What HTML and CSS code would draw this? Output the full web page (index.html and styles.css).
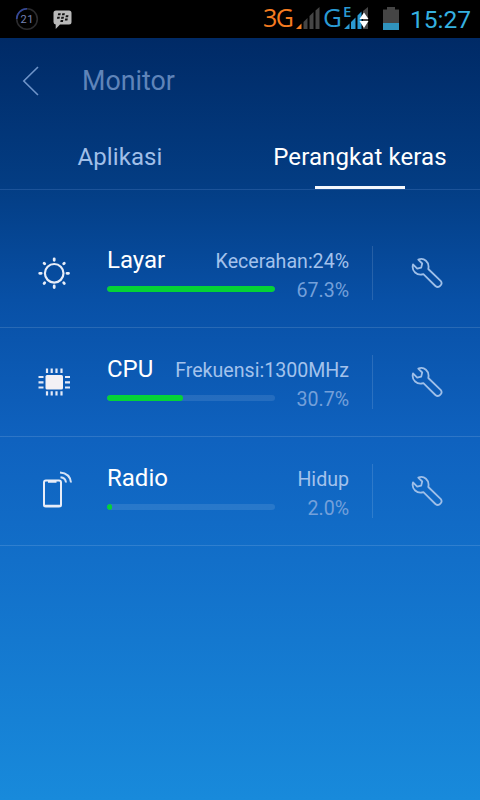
FILE: index.html
```html
<!DOCTYPE html>
<html lang="id">
<head>
    <meta charset="UTF-8">
    <meta name="viewport" content="width=device-width, initial-scale=1.0">
    <title>Monitor</title>
    <link rel="stylesheet" href="styles.css">
</head>
<body>
    <svg width="0" height="0" class="defs">
        <symbol id="wrench" viewBox="0 0 32 32">
            <path d="M7.3 2.6 C12.8 .4 18.8 4.6 17.3 12 L29.6 23.8 C32.4 27.2 28 31.8 24.4 29 L12.4 17.2 C6 19.2 .2 14 2 7.4 L6.2 11.6 L10.2 10.6 L11.2 6.5 Z"/>
        </symbol>
    </svg>

    <div class="status-bar">
        <svg class="usage" width="24" height="24" viewBox="0 0 24 24">
            <circle cx="12" cy="12" r="10.3" fill="none" stroke="#2b2b2e" stroke-width="1.6"/>
            <path d="M1.7 12 A10.3 10.3 0 0 1 12 1.7" fill="none" stroke="#34489a" stroke-width="1.6"/>
            <text x="12.3" y="16" text-anchor="middle">21</text>
        </svg>
        <svg class="bbm" width="20" height="20" viewBox="0 0 20 20">
            <path d="M3 .5 H16 Q18.5 .5 18.5 3 V12 Q18.5 14.5 16 14.5 H7 L2.7 19 V14.5 Q.5 14.3 .5 12 V3 Q.5 .5 3 .5 Z" fill="#b9b9b9"/>
            <path d="M5.2 3.3 h2.6 l-.4 2 h-2.6z M9.3 3.3 h2.6 l-.4 2 h-2.6z M4.3 6.7 h2.6 l-.4 2 h-2.6z M8.4 6.7 h2.6 l-.4 2 h-2.6z M12.9 5.2 h2.6 l-.4 2 h-2.6z M12.2 8.5 h2.6 l-.4 2 h-2.6z M7.7 10 h2.6 l-.4 2 h-2.6z" fill="#111"/>
        </svg>
        <span class="net net-3g">3G</span>
        <svg class="signal" width="24" height="23" viewBox="0 0 24 23">
            <path d="M0 22 L5.5 16.5 V22 Z" fill="#f57c20"/>
            <path d="M7.5 15 l4 -4 V22 h-4z M13.5 9 l4 -4 V22 h-4z M19.5 3.5 L23.5 0 V22 h-4z" fill="#454545"/>
        </svg>
        <span class="net net-g">G</span>
        <div class="edge">
            <svg class="signal" width="25" height="23" viewBox="0 0 25 23">
                <path d="M0 22 L5.5 16.5 V22 Z M7 15 l4.5 -4.5 V22 H7z M13.5 8.5 l4 -4 V22 h-4z" fill="#2a9ad3"/>
                <path d="M19 4 L24 0 V22 h-5z" fill="#454545"/>
                <path d="M15.5 12 L20 5.5 L24.5 12 Z M15.5 14 H24.5 L20 21 Z" fill="#fff"/>
            </svg>
            <span class="edge-label">E</span>
        </div>
        <svg class="battery" width="17" height="24" viewBox="0 0 17 24">
            <path d="M0 2.5 H4 V0 H12 V2.5 H16 V16 H0 Z" fill="#454545"/>
            <path d="M0 16 H16 V23 H0 Z" fill="#3093bd"/>
        </svg>
        <span class="clock">15:27</span>
    </div>

    <div class="header">
        <svg class="back" width="18" height="30" viewBox="0 0 18 30">
            <path d="M16 1 L1.8 15 L16 29"/>
        </svg>
        <h1>Monitor</h1>
    </div>

    <div class="tabs">
        <div class="tab"><span>Aplikasi</span></div>
        <div class="tab active"><span>Perangkat keras</span></div>
    </div>

    <div class="list">
        <div class="row">
            <svg class="icon" width="36" height="36" viewBox="0 0 36 36">
                <circle cx="18.2" cy="18.3" r="9.3" fill="none" stroke="#e8edf8" stroke-width="2.2"/>
                <path d="M18.2 3.8 V5.3 M18.2 31 V32.5 M3.7 18.3 H5.2 M31 18.3 H32.5 M8.1 8.2 L8.7 8.8 M27.7 27.8 L28.3 28.4 M8.1 28.4 L8.7 27.8 M27.7 8.8 L28.3 8.2" fill="none" stroke="#e8edf8" stroke-width="2.8" stroke-linecap="round"/>
            </svg>
            <div class="info">
                <div class="line"><span class="name">Layar</span><span class="detail">Kecerahan:24%</span></div>
                <div class="line usage-line">
                    <div class="bar"><div class="fill" style="width: 100%"></div></div>
                    <span class="percent">67.3%</span>
                </div>
            </div>
            <div class="tool"><svg width="32" height="32"><use href="#wrench"/></svg></div>
        </div>

        <div class="row">
            <svg class="icon" width="36" height="36" viewBox="0 0 36 36">
                <rect x="9.5" y="11" width="17.5" height="14.5" rx="1.5" fill="#f3f1f5"/>
                <path d="M11 4.5 V9 M15.7 4.5 V9 M20.5 4.5 V9 M25.5 4.5 V9 M11 27.3 V31.5 M15.7 27.3 V31.5 M20.5 27.3 V31.5 M25.5 27.3 V31.5 M2.5 13 H7.5 M2.5 18.3 H7.5 M2.5 23.5 H7.5 M29 13 H34 M29 18.3 H34 M29 23.5 H34" fill="none" stroke="#e3e9f7" stroke-width="2.2"/>
            </svg>
            <div class="info">
                <div class="line"><span class="name">CPU</span><span class="detail">Frekuensi:1300MHz</span></div>
                <div class="line usage-line">
                    <div class="bar"><div class="fill" style="width: 45.5%"></div></div>
                    <span class="percent">30.7%</span>
                </div>
            </div>
            <div class="tool"><svg width="32" height="32"><use href="#wrench"/></svg></div>
        </div>

        <div class="row">
            <svg class="icon" width="36" height="40" viewBox="0 0 36 40">
                <path d="M9.3 7.5 H23 Q25 7.5 25 9.5 V32 Q25 33.5 23 33.5 H9.8 Q8 33.5 8 32 V9.5 Q8 7.5 9.8 7.5 Z" fill="none" stroke="#e8edf8" stroke-width="2"/>
                <path d="M12 8.9 H20.5 M8.5 32.7 H24.5" stroke="#e8edf8" stroke-width="1.8"/>
                <path d="M24.5 4.3 Q29.5 4.8 30 9.5 M24 -.5 Q34 .3 35 9.5" fill="none" stroke="#d5e2f5" stroke-width="2"/>
            </svg>
            <div class="info">
                <div class="line"><span class="name">Radio</span><span class="detail">Hidup</span></div>
                <div class="line usage-line">
                    <div class="bar"><div class="fill" style="width: 2.7%"></div></div>
                    <span class="percent">2.0%</span>
                </div>
            </div>
            <div class="tool"><svg width="32" height="32"><use href="#wrench"/></svg></div>
        </div>
    </div>
</body>
</html>
```
FILE: styles.css
```css
* {
    box-sizing: border-box;
}

body {
    margin: 0;
    width: 480px;
    height: 800px;
    overflow: hidden;
    font-family: Roboto, sans-serif;
    color: #fff;
    background: linear-gradient(#002a66 38px, #033c82 180px, #0850a6 300px, #0f62bf 440px, #126fc9 560px, #188adb 800px);
}

.defs {
    display: block;
}

.status-bar {
    display: flex;
    align-items: flex-start;
    height: 38px;
    background: #000;
}

.usage {
    margin: 7px 0 0 15px;
}

.usage text {
    font-size: 11px;
    letter-spacing: 0.5px;
    fill: #7482b4;
}

.bbm {
    margin: 10px 0 0 14px;
}

.net {
    font-family: "Open Sans", sans-serif;
    font-size: 25px;
    letter-spacing: -1.5px;
    line-height: 35px;
}

.net-3g {
    width: 33px;
    margin-left: 190px;
    color: #f57c20;
}

.signal {
    display: block;
    margin-top: 7px;
}

.net-g {
    width: 21px;
    margin-left: 3px;
    font-size: 26px;
    color: #2a9ad3;
}

.edge {
    position: relative;
}

.edge-label {
    position: absolute;
    left: -1px;
    top: 3px;
    font-family: "Open Sans", sans-serif;
    font-size: 15px;
    font-weight: 600;
    line-height: 17px;
    color: #2a9ad3;
}

.battery {
    margin: 7px 0 0 14px;
}

.clock {
    margin-left: 10px;
    font-size: 24.5px;
    line-height: 40px;
    color: #35b1e0;
}

.header {
    display: flex;
    align-items: center;
    height: 86px;
    padding-left: 22px;
}

.back {
    margin-top: -1px;
}

.back path {
    fill: none;
    stroke: #6f94c9;
    stroke-width: 1.6;
}

h1 {
    margin: 0 0 0 42px;
    font-size: 26.8px;
    font-weight: 400;
    color: #5f84b9;
}

.tabs {
    display: flex;
    height: 66px;
    border-bottom: 1px solid #1c5399;
}

.tab {
    position: relative;
    width: 240px;
    text-align: center;
    font-size: 24px;
    letter-spacing: 0.1px;
    line-height: 67px;
    color: #a0bfe8;
}

.tab.active {
    color: #fff;
}

.tab.active::after {
    content: "";
    position: absolute;
    left: 75px;
    bottom: 0;
    width: 90px;
    height: 3px;
    background: #f4f7fc;
}

.list {
    padding-top: 29px;
}

.row {
    display: flex;
    height: 109px;
    border-bottom: 1px solid rgba(255, 255, 255, 0.13);
}

.icon {
    margin: 36px 0 0 36px;
    overflow: visible;
}

.info {
    width: 242px;
    margin-left: 35px;
    padding-top: 25px;
}

.line {
    display: flex;
    justify-content: space-between;
    align-items: baseline;
    line-height: 32px;
}

.name {
    font-size: 24px;
}

.detail {
    font-size: 19.6px;
    color: #a3c2ec;
}

.usage-line {
    align-items: center;
    height: 26px;
}

.bar {
    width: 168px;
    height: 6px;
    margin-bottom: 4px;
    border-radius: 3px;
    background: rgba(255, 255, 255, 0.1);
    overflow: hidden;
}

.fill {
    height: 6px;
    border-radius: 3px;
    background: #05d336;
}

.percent {
    font-size: 19.6px;
    color: #74a0da;
}

.tool {
    height: 54px;
    margin: 27px 0 0 23px;
    padding: 11px 0 0 38px;
    border-left: 1px solid rgba(255, 255, 255, 0.13);
}

.tool svg {
    display: block;
    fill: none;
    stroke: #9fbfe8;
    stroke-width: 1.8;
    stroke-linejoin: round;
}
```
